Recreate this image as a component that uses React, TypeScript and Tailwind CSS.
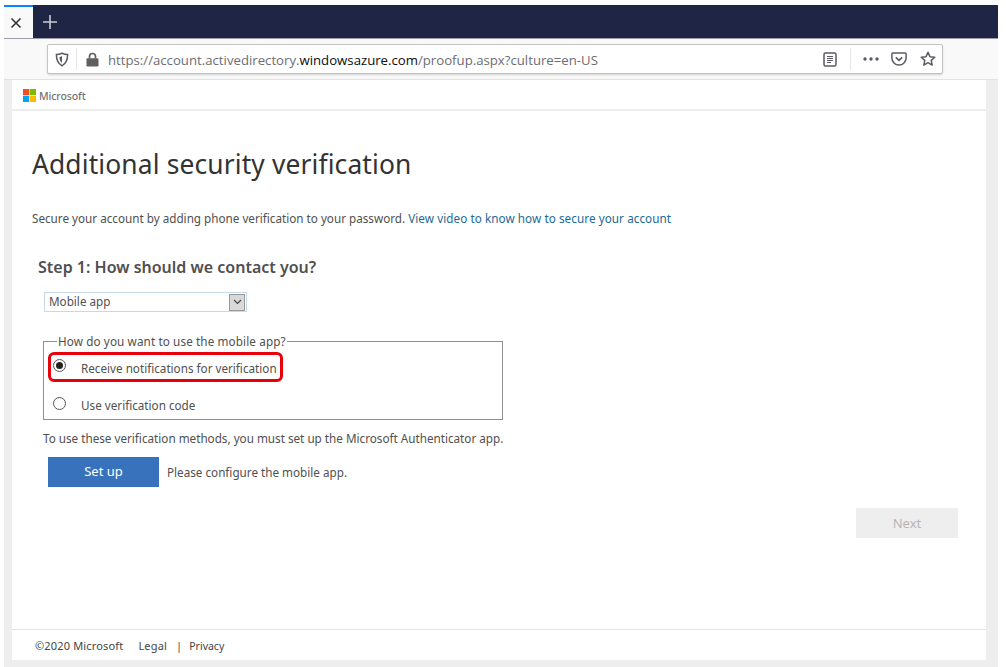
import React from "react";

function MsLogo() {
  return (
    <svg width="13" height="13" viewBox="0 0 13 13" className="shrink-0">
      <rect x="0" y="0" width="6.2" height="6.2" fill="#f25022" />
      <rect x="6.8" y="0" width="6.2" height="6.2" fill="#7fba00" />
      <rect x="0" y="6.8" width="6.2" height="6.2" fill="#00a4ef" />
      <rect x="6.8" y="6.8" width="6.2" height="6.2" fill="#ffb900" />
    </svg>
  );
}

function Radio({ checked }: { checked?: boolean }) {
  return (
    <span className="w-[13px] h-[13px] mb-[3px] rounded-full border border-[#555] bg-white flex items-center justify-center shrink-0">
      {checked && <span className="w-[7px] h-[7px] rounded-full bg-[#222]" />}
    </span>
  );
}

export default function App() {
  return (
    <div className="w-[1006px] h-[667px] overflow-hidden bg-white pl-[4px] pr-[8px] pt-[5px] flex flex-col font-['Noto_Sans','Open_Sans',sans-serif] text-[#505050]">
      {/* tab strip */}
      <div className="h-[33px] flex bg-[#1f2544] shrink-0">
        <div className="w-[29px] bg-[#f9f9fa] border-t-2 border-[#0a84ff] flex items-center justify-center pr-[6px]">
          <svg width="12" height="12" viewBox="0 0 12 12" fill="none" stroke="#333" strokeWidth="1.6">
            <path d="M1.5 1.5l9 9M10.5 1.5l-9 9" />
          </svg>
        </div>
        <div className="w-[34px] flex items-center justify-center">
          <svg width="16" height="16" viewBox="0 0 16 16" fill="none" stroke="#c9cad2" strokeWidth="1.6">
            <path d="M8 1v14M1 8h14" />
          </svg>
        </div>
      </div>
      {/* toolbar */}
      <div className="h-[42px] bg-[#f9f9fa] border-t border-[#9a9ca8] border-b border-b-[#e2e2e4] shrink-0 pl-[43px] pr-[55px] pt-[5px]">
        <div className="h-[30px] bg-white border border-[#c4c4c6] rounded-[2px] shadow-[0_1px_2px_rgba(0,0,0,0.15)] flex items-center">
          <div className="w-[28px] flex items-center justify-center">
            <svg width="14" height="15" viewBox="0 0 14 15" fill="none">
              <path d="M7 1.2c2 .9 3.8 1.3 5.6 1.3 0 5-1 8.800-5.600 11.300C2.400 11.300 1.400 7.500 1.400 2.500 3.200 2.500 5 2.100 7 1.200z" stroke="#5b5b66" strokeWidth="1.500" />
              <path d="M7 4v7c-1.800-1.300-2.500-3.500-2.600-6C5.400 5 6.200 4.500 7 4z" fill="#5b5b66" />
            </svg>
          </div>
          <div className="w-px h-[22px] bg-[#e6e6e8]" />
          <div className="w-[31px] flex items-center justify-center">
            <svg width="13" height="15" viewBox="0 0 13 15">
              <path d="M3.500 6.500V4.500a3 3 0 0 1 6 0v2" fill="none" stroke="#5f5f5f" strokeWidth="1.700" />
              <rect x="0.500" y="6.300" width="12" height="8.200" rx="1.200" fill="#5f5f5f" />
            </svg>
          </div>
          <div className="text-[13.200px] pt-[3px] text-[#6d6d72] flex-1 whitespace-nowrap font-['Open_Sans',sans-serif]">
            https://account.activedirectory.<span className="text-[#0c0c0d]">windowsazure.com</span>/proofup.aspx?culture=en-US
          </div>
          <svg width="14" height="15" viewBox="0 0 14 15" fill="none" stroke="#5b5b66" className="mr-[13px]">
            <rect x="1" y="1" width="12" height="13" rx="1.500" strokeWidth="1.500" />
            <path d="M4 4.500h6M4 6.500h6M4 8.500h6M4 10.500h4" strokeWidth="1" />
          </svg>
          <div className="w-px h-[22px] bg-[#e6e6e8] mr-[12px]" />
          <svg width="16" height="4" viewBox="0 0 16 4" fill="#5b5b66" className="mr-[12px]">
            <circle cx="2" cy="2" r="1.700" />
            <circle cx="8" cy="2" r="1.700" />
            <circle cx="14" cy="2" r="1.700" />
          </svg>
          <svg width="16" height="14" viewBox="0 0 16 14" fill="none" stroke="#5b5b66" strokeWidth="1.500" className="mr-[13px]">
            <path d="M1.800 1h12.400c.5 0 .9.400.9.900V6a7 7 0 0 1-14.200 0V1.900c0-.5.400-.9.900-.9z" />
            <path d="M4.800 5.300L8 8.300l3.200-3" strokeWidth="1.700" />
          </svg>
          <svg width="16" height="16" viewBox="0 0 16 16" fill="none" stroke="#5b5b66" strokeWidth="1.500" strokeLinejoin="round" className="mr-[6px]">
            <path d="M8 1.300l2 4.400 4.800.5-3.600 3.200 1 4.700L8 11.700l-4.200 2.400 1-4.700L1.200 6.200 6 5.700z" />
          </svg>
        </div>
      </div>
      {/* page */}
      <div className="h-[587px] bg-[#eeeeee] pl-[8px] pr-[12px] shrink-0">
        <div className="h-[580px] bg-white flex flex-col">
          <div className="h-[31px] border-b-2 border-[#ececec] pl-[11px] pt-[2px] flex items-center gap-[3px] shrink-0">
            <MsLogo />
            <span className="text-[10.500px] pt-[2px] tracking-[-0.01em] text-[#737373] font-medium">Microsoft</span>
          </div>
          <div className="flex-1 flex flex-col pl-[20px]">
            <h1 className="text-[26.400px] leading-[36px] mt-[35px] text-[#333] font-normal tracking-[0.005em]">Additional security verification</h1>
            <p className="text-[11.700px] leading-[16px] mt-[28px] whitespace-nowrap">
              Secure your account by adding phone verification to your password. <span className="text-[#1c6a96] tracking-[0.006em]">View video to know how to secure your account</span>
            </p>
            <h2 className="text-[16px] leading-[20px] font-semibold mt-[31px] ml-[6px] text-[#505050]">Step 1: How should we contact you?</h2>
            <div className="mt-[15px] ml-[12px] w-[203px] h-[20px] border border-[#c5d9ea] flex items-center justify-between">
              <span className="text-[11.700px] pl-[4px]">Mobile app</span>
              <div className="w-[16px] h-[17px] bg-[#d9d9d9] border border-[#999] flex items-center justify-center mr-px">
                <svg width="9" height="6" viewBox="0 0 9 6" fill="none" stroke="#444" strokeWidth="1.200">
                  <path d="M1 1l3.500 3.500L8 1" />
                </svg>
              </div>
            </div>
            <fieldset className="mt-[22px] ml-[11px] w-[460px] h-[86px] border border-[#8f8f8f] pl-[4px] pr-0 m-0">
              <legend className="text-[11.700px] leading-[14px] ml-[9px] px-[1px] tracking-[0.01em]">How do you want to use the mobile app?</legend>
              <div className="flex items-center w-[235px] h-[30px] border-[3px] border-[#e8000d] rounded-[6px] mt-[4px] pl-[2px]">
                <Radio checked />
                <span className="text-[11.700px] ml-[15px] pt-[3px] whitespace-nowrap">Receive notifications for verification</span>
              </div>
              <div className="flex items-center h-[20px] mt-[13px] pl-[5px]">
                <Radio />
                <span className="text-[11.700px] ml-[15px] pt-[2px] whitespace-nowrap">Use verification code</span>
              </div>
            </fieldset>
            <p className="text-[11.700px] leading-[16px] mt-[10px] ml-[11px] whitespace-nowrap">To use these verification methods, you must set up the Microsoft Authenticator app.</p>
            <div className="flex items-center mt-[11px] ml-[16px]">
              <div className="w-[111px] h-[30px] bg-[#3872bc] text-white text-[13px] flex items-center justify-center">Set up</div>
              <span className="text-[11.700px] ml-[8px] pt-[1px]">Please configure the mobile app.</span>
            </div>
            <div className="flex justify-end mt-[21px] pr-[28px]">
              <div className="w-[102px] h-[30px] pt-[1px] bg-[#eeeeee] text-[#b5b5b5] text-[13px] flex items-center justify-center">Next</div>
            </div>
          </div>
          <div className="h-[31px] border-t border-[#e2e2e2] flex items-center pl-[23px] pt-[2px] text-[11px] tracking-[0.015em] text-[#444] shrink-0 whitespace-nowrap">
            <span>©2020 Microsoft</span>
            <span className="ml-[15px]">Legal</span>
            <span className="ml-[9px]">|</span>
            <span className="ml-[7px] pt-[1px] text-[10.500px] tracking-normal">Privacy</span>
          </div>
        </div>
      </div>
    </div>
  );
}
